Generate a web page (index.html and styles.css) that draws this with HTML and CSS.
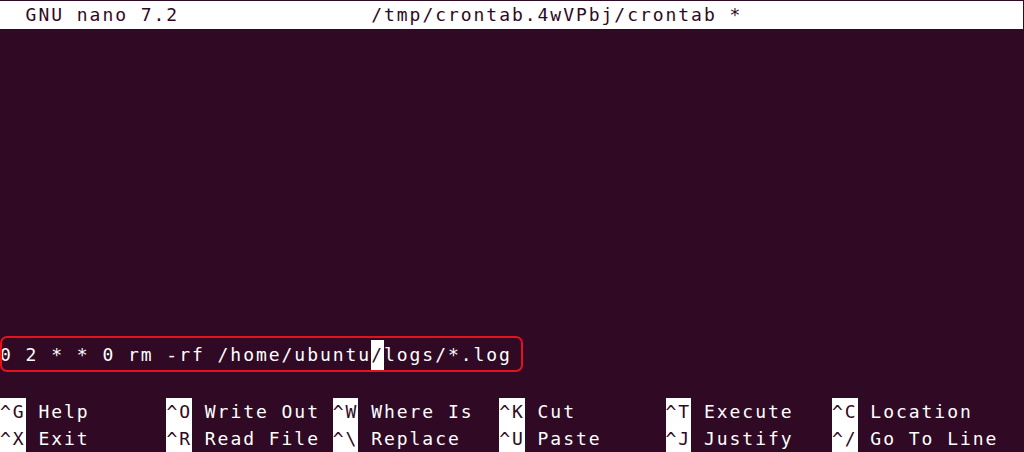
FILE: index.html
```html
<!DOCTYPE html>
<html lang="en">

<head>
    <meta charset="UTF-8">
    <meta name="viewport" content="width=device-width, initial-scale=1.0">
    <title>GNU nano - crontab</title>
    <link rel="stylesheet" href="styles.css">
</head>

<body>
    <div class="terminal">
        <!-- Title bar -->
        <div class="titlebar">
            <span class="app-name">GNU nano 7.2</span>
            <span class="file-name">/tmp/crontab.4wVPbj/crontab *</span>
        </div>

        <!-- Edit area -->
        <div class="editor">
            <div class="edit-line">0 2 * * 0 rm -rf /home/ubuntu<span class="cursor">/</span>logs/*.log</div>
            <div class="highlight-box"></div>
        </div>

        <!-- Shortcut help -->
        <div class="shortcuts">
            <div class="shortcut"><span class="key">^G</span><span class="label">Help</span></div>
            <div class="shortcut"><span class="key">^O</span><span class="label">Write Out</span></div>
            <div class="shortcut"><span class="key">^W</span><span class="label">Where Is</span></div>
            <div class="shortcut"><span class="key">^K</span><span class="label">Cut</span></div>
            <div class="shortcut"><span class="key">^T</span><span class="label">Execute</span></div>
            <div class="shortcut"><span class="key">^C</span><span class="label">Location</span></div>
            <div class="shortcut"><span class="key">^X</span><span class="label">Exit</span></div>
            <div class="shortcut"><span class="key">^R</span><span class="label">Read File</span></div>
            <div class="shortcut"><span class="key">^\</span><span class="label">Replace</span></div>
            <div class="shortcut"><span class="key">^U</span><span class="label">Paste</span></div>
            <div class="shortcut"><span class="key">^J</span><span class="label">Justify</span></div>
            <div class="shortcut"><span class="key">^/</span><span class="label">Go To Line</span></div>
        </div>
    </div>
</body>

</html>
```

FILE: styles.css
```css
/* Global Styles */
* {
    margin: 0;
    padding: 0;
    box-sizing: border-box;
}

body {
    background-color: #300a24;
    color: #ffffff;
    font-family: 'DejaVu Sans Mono', 'Liberation Mono', monospace;
    font-size: 18px;
    letter-spacing: 1.96px;
    overflow: hidden;
}

.terminal {
    width: 1024px;
    height: 452px;
    display: flex;
    flex-direction: column;
}

/* Title bar */
.titlebar {
    display: flex;
    flex-shrink: 0;
    height: 28px;
    margin: 1px 1px 0 0;
    line-height: 28px;
    background-color: #ffffff;
    color: #300a24;
    white-space: pre;
}

.app-name {
    width: 345.6px;
    margin-left: 25.6px;
}

/* Edit area */
.editor {
    position: relative;
    flex-shrink: 0;
    height: 369px;
    padding-top: 311px;
}

.edit-line {
    height: 30px;
    line-height: 30px;
    white-space: pre;
}

.cursor {
    display: inline-block;
    height: 30px;
    background-color: #ffffff;
    color: #300a24;
}

.highlight-box {
    position: absolute;
    left: 0;
    top: 307px;
    width: 523px;
    height: 36px;
    border: 2px solid #e3131c;
    border-radius: 7px;
}

/* Shortcut help */
.shortcuts {
    display: grid;
    grid-template-columns: repeat(6, 166.4px);
    grid-auto-rows: 27px;
}

.shortcut {
    display: flex;
    line-height: 27px;
    white-space: pre;
}

.key {
    width: 25.6px;
    background-color: #ffffff;
    color: #300a24;
}

.label {
    margin-left: 12.8px;
}
```
